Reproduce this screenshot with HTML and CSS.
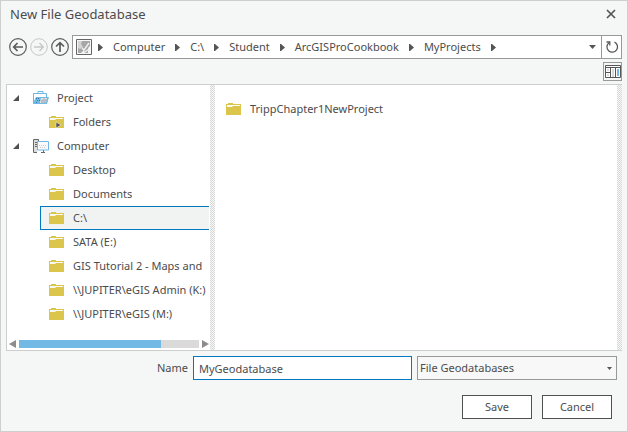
FILE: index.html
```html
<!DOCTYPE html>
<html lang="en">
<head>
<meta charset="utf-8">
<title>New File Geodatabase</title>
<link rel="stylesheet" href="styles.css">
</head>
<body>
<svg class="defs" aria-hidden="true">
  <symbol id="folder" viewBox="0 0 15 12">
    <path fill="#dbc54b" d="M0 1h2V0h5v1h8v11H0z"/>
    <path fill="#fbfaf3" d="M1 2h13v2H1z"/>
    <path fill="#dbc54b" d="M1 4h5l1-1h7v1z"/>
  </symbol>
  <symbol id="crumb" viewBox="0 0 5 7"><path fill="#555" d="M0 0h1l4 3.500-4 3.500H0z"/></symbol>
  <symbol id="twisty" viewBox="0 0 6 6"><path fill="#505050" d="M6 0v6H0z"/></symbol>
</svg>
<main class="dialog">
  <header class="titlebar">
    <h1>New File Geodatabase</h1>
    <button class="plain" type="button" aria-label="Close">
      <svg width="10" height="10" viewBox="0 0 10 10"><path d="M1 1l8 8M9 1L1 9" fill="none" stroke="#555" stroke-width="1.700"/></svg>
    </button>
  </header>

  <nav class="navbar">
    <div class="history">
      <button class="plain" type="button" aria-label="Back">
        <svg width="18" height="18" viewBox="0 0 18 18" fill="none" stroke="#5a5a5a"><circle cx="9" cy="9" r="8.300" stroke-width="1.200"/><path d="M14 9H5M8.500 5L4.700 9l3.800 4" stroke-width="1.700"/></svg>
      </button>
      <button class="plain" type="button" aria-label="Forward" disabled>
        <svg width="18" height="18" viewBox="0 0 18 18" fill="none" stroke="#c6c8c8"><circle cx="9" cy="9" r="8.300"/><path d="M4 9h9M9.500 5l3.800 4-3.800 4" stroke-width="1.400"/></svg>
      </button>
      <button class="plain" type="button" aria-label="Up">
        <svg width="18" height="18" viewBox="0 0 18 18" fill="none" stroke="#5a5a5a"><circle cx="9" cy="9" r="8.300" stroke-width="1.200"/><path d="M9 14V5M5 8.500l4-3.800 4 3.800" stroke-width="1.700"/></svg>
      </button>
    </div>
    <div class="address">
      <svg class="place" width="16" height="16" viewBox="0 0 16 16"><path fill="#f6f6f6" stroke="#666" d="M.5.5h15v15H.5z"/><path fill="#a7a7a7" d="M2 2h12v5l-2 2v5H9l-1-3-3 3H2z"/><path fill="#d5d5d5" d="M2 2h4L5 5l2 3-3 2-2-1z"/><path d="M6 9l2 2 5-7M9 13l4-3" fill="none" stroke="#eee" stroke-width="1.500"/></svg>
      <ol class="crumbs">
        <li><svg width="5" height="7"><use href="#crumb"/></svg><a href="#">Computer</a></li>
        <li><svg width="5" height="7"><use href="#crumb"/></svg><a href="#">C:\</a></li>
        <li><svg width="5" height="7"><use href="#crumb"/></svg><a href="#">Student</a></li>
        <li><svg width="5" height="7"><use href="#crumb"/></svg><a href="#">ArcGISProCookbook</a></li>
        <li><svg width="5" height="7"><use href="#crumb"/></svg><a href="#">MyProjects</a></li>
        <li><svg width="5" height="7"><use href="#crumb"/></svg></li>
      </ol>
      <button class="plain recent" type="button" aria-label="Recent locations">
        <svg width="7" height="4" viewBox="0 0 7 4"><path fill="#555" d="M0 0h7L3.500 4z"/></svg>
      </button>
      <button class="plain refresh" type="button" aria-label="Refresh">
        <svg width="14" height="14" viewBox="0 0 14 14" fill="none" stroke="#595959" stroke-width="1.300"><path d="M9.500 2.100A5.300 5.300 0 1 1 4 2.700"/><path d="M1.500 2h3.300v3.500"/></svg>
      </button>
    </div>
  </nav>

  <div class="toolbar">
    <button class="view" type="button" aria-label="Details panel">
      <svg width="16" height="13" viewBox="0 0 16 13"><path fill="#fff" stroke="#555" d="M.5.5h15v12H.5z"/><path stroke="#555" d="M0 2.500h16M5.500 3v9M10.500 3v9M1 7.500h4" /><path fill="#d8d8d8" d="M2 4h2v2H2zM2 9h2v2H2zM7 4h2v8H7z"/><path fill="#72b9e6" d="M12 4h2v7h-2z"/></svg>
    </button>
  </div>

  <section class="browser">
    <div class="sidebar">
      <ul class="tree">
        <li class="root"><svg width="6" height="6"><use href="#twisty"/></svg>
          <svg class="kind" width="16" height="14" viewBox="0 0 16 14"><path d="M5 3V.5h5V3M.5 13V2.500h13V8" fill="none" stroke="#6fb7e4"/><path fill="#fff" d="M1 3h12v3H1z"/><path fill="#72b9e6" d="M3 6h13l-2 7H1v-3z"/><path fill="#ececec" d="M8 7h6l-2 5H7z"/><path fill="#bdbdbd" d="M8 9l3-2 3 2-2 3H8z"/><path fill="#3279a8" d="M3 7h1v1H3zM5 7h1v1H5zM4 9h1v1H4zM6 9h1v1H6zM3 11h1v1H3z"/></svg>
          <span>Project</span></li>
        <li class="leaf">
          <svg class="kind" width="15" height="12" viewBox="0 0 15 12"><use href="#folder" width="15" height="12"/><path fill="#505050" stroke="#f6f1d3" stroke-width=".6" d="M7 6l5 3-5 3z"/></svg>
          <span>Folders</span></li>
        <li class="root"><svg width="6" height="6"><use href="#twisty"/></svg>
          <svg class="kind" width="16" height="14" viewBox="0 0 16 14"><path fill="#ddd" stroke="#666" d="M4 13.500H.5V.5h5V2"/><path stroke="#666" d="M2 3.500h2M2 5.500h2M2 7.500h2M8 13.500h4M10.500 11v2"/><path fill="#fafafa" stroke="#6fb7e4" d="M4.500 2.500h11v8.500h-11z"/><path d="M6 6.500h8M7 8.500h6" stroke="#ccc" stroke-dasharray="1 1"/></svg>
          <span>Computer</span></li>
        <li class="leaf"><svg class="kind" width="15" height="12"><use href="#folder"/></svg><span>Desktop</span></li>
        <li class="leaf"><svg class="kind" width="15" height="12"><use href="#folder"/></svg><span>Documents</span></li>
        <li class="leaf selected"><svg class="kind" width="15" height="12"><use href="#folder"/></svg><span>C:\</span></li>
        <li class="leaf"><svg class="kind" width="15" height="12"><use href="#folder"/></svg><span>SATA (E:)</span></li>
        <li class="leaf"><svg class="kind" width="15" height="12"><use href="#folder"/></svg><span>GIS Tutorial 2 - Maps and</span></li>
        <li class="leaf"><svg class="kind" width="15" height="12"><use href="#folder"/></svg><span>\\JUPITER\eGIS Admin (K:)</span></li>
        <li class="leaf"><svg class="kind" width="15" height="12"><use href="#folder"/></svg><span>\\JUPITER\eGIS (M:)</span></li>
      </ul>
      <div class="scroll">
        <svg width="7" height="8" viewBox="0 0 7 8"><path fill="#8c8c8c" d="M7 0v8L0 4z"/></svg>
        <div class="track"><div class="thumb"></div></div>
        <svg width="7" height="8" viewBox="0 0 7 8"><path fill="#8c8c8c" d="M0 0v8l7-4z"/></svg>
      </div>
    </div>
    <div class="rail"></div>
    <ul class="files">
      <li><svg width="15" height="12"><use href="#folder"/></svg><span>TrippChapter1NewProject</span></li>
    </ul>
    <div class="rail"></div>
  </section>

  <form class="form">
    <label for="name">Name</label>
    <input id="name" type="text" value="MyGeodatabase">
    <div class="picker">
      <select aria-label="File type"><option>File Geodatabases</option></select>
      <svg width="5" height="3" viewBox="0 0 5 3"><path fill="#555" d="M0 0h5L2.500 3z"/></svg>
    </div>
  </form>

  <footer class="actions">
    <button type="button">Save</button>
    <button type="button">Cancel</button>
  </footer>
</main>
</body>
</html>
```

FILE: styles.css
```css
* { box-sizing: border-box; }

body {
  margin: 0;
  color: #4c4c4c;
  font: 11px/16px "Noto Sans", "Open Sans", sans-serif;
}

svg { display: block; flex: none; }
ul, ol { list-style: none; margin: 0; padding: 0; }
a { color: inherit; text-decoration: none; }
button, input, select { font: inherit; color: inherit; margin: 0; border-radius: 0; }

.defs { position: absolute; width: 0; height: 0; }
.plain { display: grid; place-items: center; padding: 0; border: 0; background: none; }

.dialog {
  display: flex;
  flex-direction: column;
  min-height: 100vh;
  padding: 0 5px;
  border: 1px solid #cdcfcf;
  background: #f5f7f7;
}

.titlebar {
  display: flex;
  align-items: center;
  justify-content: space-between;
  height: 26px;
  padding: 0 6px 0 4px;
}
.titlebar h1 { margin: 0; font-size: 13px; line-height: 20px; font-weight: 400; }

.navbar { display: flex; gap: 3px; margin-top: 8px; }
.history { display: flex; align-items: center; gap: 3px; padding-left: 3px; }

.address {
  display: flex;
  flex: 1;
  align-items: center;
  height: 24px;
  padding-left: 3px;
  border: 1px solid #999;
  background: #fff;
}
.crumbs { display: flex; flex: 1; margin-left: 6px; gap: 10px; }
.crumbs li { display: flex; align-items: center; gap: 10px; }
.recent { width: 17px; height: 22px; }
.refresh { width: 20px; height: 22px; border-left: 1px solid #999; }

.toolbar { display: flex; justify-content: flex-end; height: 25px; padding-top: 3px; }
.view {
  display: grid;
  place-items: center;
  width: 19px;
  height: 19px;
  padding: 0;
  border: 1px solid #999;
  background: #f5f7f7;
}

.browser {
  display: flex;
  height: 267px;
  border: 1px solid #cdcfcf;
  border-right: 0;
  background: #fff;
}
.sidebar {
  display: flex;
  flex: 0 0 202px;
  flex-direction: column;
  justify-content: space-between;
  overflow: hidden;
  margin-right: 1px;
  padding: 1px 0 2px;
}
.tree li { display: flex; align-items: center; height: 24px; white-space: nowrap; }
.tree span { margin-left: 9px; }
.root { padding-left: 6px; }
.root .kind { margin-left: 14px; }
.root span { margin-left: 8px; }
.leaf { margin-left: 33px; padding-left: 8px; border: 1px solid transparent; border-right: 0; }
.tree .selected { border-color: #0079c1; background: #f1f3f3; }

.scroll { display: flex; align-items: center; gap: 3px; padding: 0 0 0 2px; }
.track { flex: 1; height: 8px; background: #dadada; }
.thumb { width: 79%; height: 8px; background: #72b9e6; }

.rail {
  flex: 0 0 5px;
  background: repeating-conic-gradient(#d6d8d8 0 25%, #f8f8f8 0 50%) 0 0 / 2px 2px;
}

.files { flex: 1; padding: 12px 11px; }
.files li { display: flex; align-items: center; gap: 9px; height: 24px; }

.form {
  display: grid;
  grid-template-columns: 182px 219fr 200fr;
  align-items: center;
  gap: 5px;
  margin-top: 5px;
  padding-right: 5px;
}
.form label { text-align: right; }
.form input {
  width: 100%;
  min-width: 0;
  height: 24px;
  padding: 0 5px;
  border: 1px solid #0079c1;
  outline: 0;
  background: #fff;
}
.picker { display: grid; align-items: center; }
.picker > * { grid-area: 1 / 1; }
.picker svg { justify-self: end; margin-right: 5px; pointer-events: none; }
.picker select {
  appearance: none;
  width: 100%;
  height: 24px;
  padding: 0 2px;
  border: 1px solid #999;
  background: #f8f8f8;
}

.actions {
  display: flex;
  justify-content: flex-end;
  gap: 10px;
  margin-top: 15px;
  padding: 0 10px 12px 0;
}
.actions button {
  width: 70px;
  height: 24px;
  padding: 0;
  border: 1px solid #505050;
  background: #fff;
}
```
